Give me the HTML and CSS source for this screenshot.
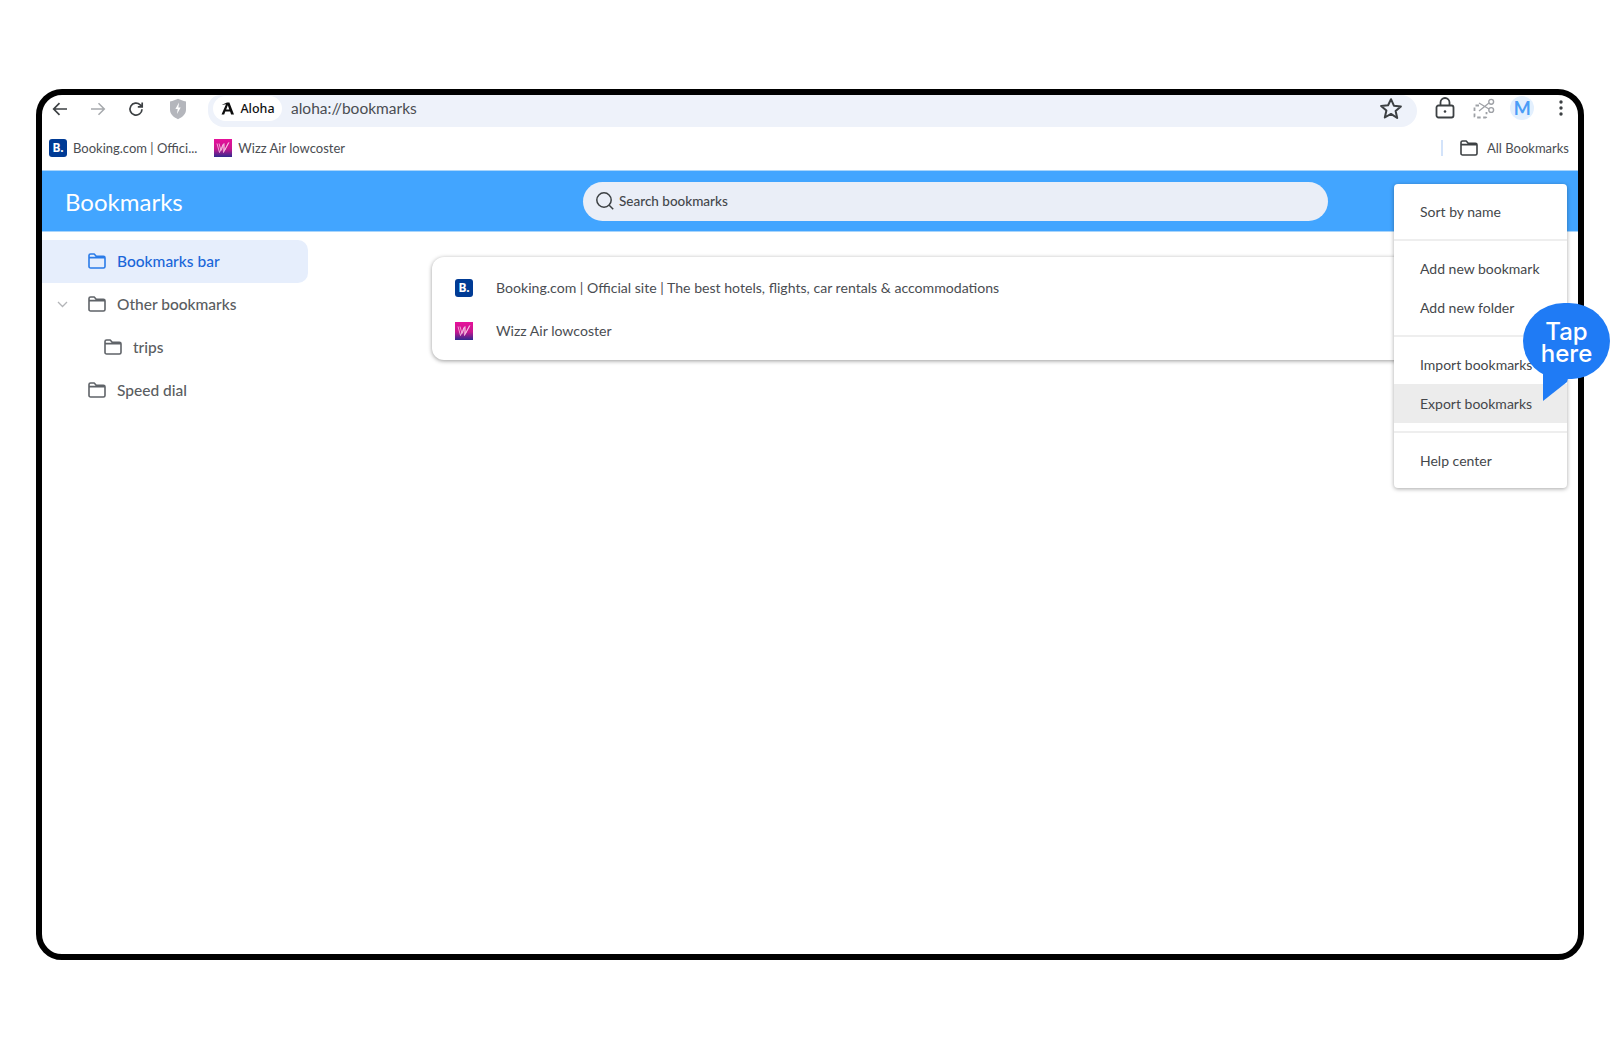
FILE: index.html
```html
<!DOCTYPE html>
<html lang="en">
<head>
<meta charset="utf-8">
<title>Bookmarks</title>
<link rel="stylesheet" href="styles.css">
</head>
<body>
<svg class="defs" width="0" height="0" aria-hidden="true">
  <defs>
    <symbol id="folder" viewBox="0 0 18 16"><path d="M1 4V2.600C1 1.700 1.700 1 2.600 1h3.600l2 2.200h7.200c.9 0 1.600.7 1.600 1.600v8.600c0 .9-.7 1.600-1.600 1.600H2.600c-.9 0-1.600-.7-1.600-1.600V4zM1 4.600h16" fill="none" stroke="currentColor" stroke-width="1.600" stroke-linejoin="round"/></symbol>
    <linearGradient id="wizz" x1="0" y1="0" x2="0" y2="1"><stop offset="0" stop-color="#e6119a"/><stop offset=".55" stop-color="#c8168f"/><stop offset="1" stop-color="#2f2a8f"/></linearGradient>
    <symbol id="wizzicon" viewBox="0 0 18 18"><rect width="18" height="18" fill="url(#wizz)"/><path d="M3 4.500l2.500 9 3.500-8 .5 8 5.500-10M5 4.500l2 7 3-7 .5 7 4-8" fill="none" stroke="#f7c7e6" stroke-width=".8"/></symbol>
  </defs>
</svg>
<div class="frame">
  <header class="toolbar">
    <div class="nav">
      <span class="tool"><svg width="18" height="18" viewBox="0 0 18 18"><path d="M16 9H3M8.500 3.200L2.700 9l5.800 5.800" fill="none" stroke="#3c4043" stroke-width="1.700"/></svg></span>
      <span class="tool"><svg width="18" height="18" viewBox="0 0 18 18"><path d="M2 9h13M9.500 3.200L15.300 9l-5.800 5.800" fill="none" stroke="#a6a9ad" stroke-width="1.500"/></svg></span>
      <span class="tool"><svg width="18" height="18" viewBox="0 0 18 18"><path d="M15 9.200a6 6 0 1 1-1.800-4.400L15 6.600M15.200 2.400v4.400h-4.400" fill="none" stroke="#3c4043" stroke-width="1.700"/></svg></span>
      <span class="tool shield"><svg width="18" height="22" viewBox="0 0 18 22"><path d="M1 3.400C4 3 6.600 2 9 .8c2.400 1.200 5 2.200 8 2.600v8.400c0 4.200-3.400 7.400-8 9.400-4.600-2-8-5.200-8-9.400z" fill="#b4b6bc"/><path d="M10 4.500L6.400 11h2.300L8 16l3.700-6.500H9.400z" fill="#fff"/></svg></span>
    </div>
    <div class="omnibox">
      <span class="pill">
        <svg width="15" height="13" viewBox="0 0 15 13"><path d="M7 .5h2.400L14 12.500h-2.900l-1-3H5.300l-1.100 3H1.500L6 2.300l-4.500.6zM6.200 7.400h3.100L7.800 3.300z" fill="#0c0c0c"/></svg>
        Aloha
      </span>
      <span class="url">aloha://bookmarks</span>
      <svg class="star" width="24" height="24" viewBox="0 0 24 24"><path d="M12 2.200l2.900 6.500 7 .7-5.300 4.700 1.600 6.900L12 16.900l-6.200 3.600 1.600-6.900-5.300-4.700 7-.7z" fill="none" stroke="#3c4043" stroke-width="2" stroke-linejoin="round"/></svg>
    </div>
    <div class="actions">
      <span class="action"><svg width="20" height="22" viewBox="0 0 20 22"><rect x="1.500" y="8.500" width="17" height="12" rx="2" fill="none" stroke="#3c4043" stroke-width="1.800"/><path d="M5.500 8.500V5.500a4.500 4.500 0 0 1 9 0v3" fill="none" stroke="#3c4043" stroke-width="1.800"/><circle cx="10" cy="14.500" r="1.300" fill="#3c4043"/></svg></span>
      <span class="action"><svg width="22" height="21" viewBox="0 0 22 21"><path d="M6 7.500H2.500a1 1 0 0 0-1 1v10a1 1 0 0 0 1 1h10a1 1 0 0 0 1-1V14" fill="none" stroke="#9ea1a6" stroke-width="1.800" stroke-dasharray="3.500 2.500"/><path d="M6 5l10 6M6 13l10-8" fill="none" stroke="#9ea1a6" stroke-width="1.300"/><circle cx="18.200" cy="3.800" r="2.400" fill="none" stroke="#9ea1a6" stroke-width="1.400"/><circle cx="18.200" cy="12" r="2.400" fill="none" stroke="#9ea1a6" stroke-width="1.400"/></svg></span>
      <span class="action"><span class="avatar">M</span></span>
      <span class="action"><svg width="4" height="16" viewBox="0 0 4 16"><circle cx="2" cy="2" r="1.700" fill="#3c4043"/><circle cx="2" cy="8" r="1.700" fill="#3c4043"/><circle cx="2" cy="14" r="1.700" fill="#3c4043"/></svg></span>
    </div>
  </header>

  <nav class="barks">
    <a class="bark first"><span class="fav-b small">B.</span>Booking.com | Offici...</a>
    <a class="bark"><svg class="fav" width="18" height="18"><use href="#wizzicon"/></svg>Wizz Air lowcoster</a>
    <span class="spacer"></span>
    <span class="divider"></span>
    <a class="bark all"><svg class="fold-dark" width="18" height="16"><use href="#folder"/></svg>All Bookmarks</a>
  </nav>

  <div class="pagehead">
    <h1>Bookmarks</h1>
    <div class="search">
      <svg width="20" height="20" viewBox="0 0 20 20"><circle cx="9" cy="9" r="7.200" fill="none" stroke="#3c4043" stroke-width="1.500"/><path d="M14.200 14.200l4 4" stroke="#3c4043" stroke-width="1.500"/></svg>
      <span>Search bookmarks</span>
    </div>
  </div>

  <main class="main">
    <aside class="tree">
      <div class="node selected"><svg width="18" height="16"><use href="#folder"/></svg>Bookmarks bar</div>
      <div class="node">
        <svg class="chev" width="11" height="7" viewBox="0 0 11 7"><path d="M1 1l4.500 4.500L10 1" fill="none" stroke="#b3b5b8" stroke-width="1.300"/></svg>
        <svg width="18" height="16"><use href="#folder"/></svg>Other bookmarks
      </div>
      <div class="node child"><svg width="18" height="16"><use href="#folder"/></svg>trips</div>
      <div class="node"><svg width="18" height="16"><use href="#folder"/></svg>Speed dial</div>
    </aside>
    <section class="content">
      <div class="card">
        <div class="row"><span class="fav-b">B.</span>Booking.com | Official site | The best hotels, flights, car rentals &amp; accommodations</div>
        <div class="row"><svg class="fav" width="18" height="18"><use href="#wizzicon"/></svg>Wizz Air lowcoster</div>
      </div>
    </section>
  </main>

  <div class="menu">
    <div class="item">Sort by name</div>
    <hr>
    <div class="item">Add new bookmark</div>
    <div class="item">Add new folder</div>
    <hr>
    <div class="item">Import bookmarks</div>
    <div class="item active">Export bookmarks</div>
    <hr>
    <div class="item">Help center</div>
  </div>

  <div class="bubble">
    <svg class="tail" width="30" height="40" viewBox="0 0 30 40"><path d="M0 0h30l-6 21L0 40z" fill="#1f7bf5"/></svg>
    <span>Tap<br>here</span>
  </div>
</div>
</body>
</html>
```

FILE: styles.css
```css
* { box-sizing: border-box; }
html, body { margin: 0; padding: 0; background: #fff; }
body { font-family: "Lato", "Noto Sans", sans-serif; color: #3c4043; }
.defs { position: absolute; }

.frame {
  position: relative;
  width: 1548px;
  height: 871px;
  margin: 89px 0 0 36px;
  border: 6px solid #000;
  border-radius: 26px;
  display: flex;
  flex-direction: column;
}

/* toolbar */
.toolbar { height: 32px; display: flex; align-items: center; }
.nav { display: flex; flex: none; width: 167px; margin: -5px 0 0 -1px; }
.tool { width: 38px; height: 24px; display: flex; align-items: center; justify-content: center; }
.tool.shield { margin-left: 4px; }
.omnibox {
  flex: none;
  width: 1209px;
  height: 32px;
  background: #eef2fa;
  border-radius: 14px 18px 18px 18px;
  display: flex;
  align-items: center;
  padding: 0 14px 0 5px;
}
.pill {
  height: 25px;
  width: 69px;
  margin-top: -6px;
  border-radius: 13px;
  background: #fff;
  display: flex;
  align-items: center;
  justify-content: center;
  gap: 5px;
  font-family: "Noto Sans", sans-serif;
  font-size: 12.500px;
  font-weight: 500;
  color: #111;
}
.url { margin-left: 9px; font-size: 15.500px; color: #4a4d52; margin-top: -6px; flex: 1; }
.star { margin-top: -4px; }
.actions { display: flex; align-items: center; margin-left: 9px; margin-top: -6px; }
.action { width: 38.500px; height: 24px; display: flex; align-items: center; justify-content: center; }
.avatar {
  width: 24px; height: 24px; border-radius: 50%;
  background: #e3f0fe; color: #4a9cf7;
  font-size: 18px; font-weight: 700;
  display: flex; align-items: center; justify-content: center;
}

/* bookmarks bar */
.barks { height: 44px; padding-bottom: 2px; display: flex; align-items: center; font-size: 13px; color: #4a4d52; border-bottom: 1px solid #a9d5fb; }
.bark { display: flex; align-items: center; gap: 6px; margin-right: 17px; white-space: nowrap; }
.bark.first { margin-left: 7px; }
.spacer { flex: 1; }
.divider { width: 2px; height: 16px; background: #d3e3fa; margin-right: 17px; }
.bark.all { gap: 9px; margin-right: 9px; }
.fold-dark { color: #3c4043; }
.fav { flex: none; display: block; }
.fav-b {
  width: 18px; height: 18px; flex: none;
  border-radius: 3px;
  background: #003b95; color: #fff;
  font-family: "Noto Sans", sans-serif;
  font-size: 12px; font-weight: 700; line-height: 18px;
  text-align: center;
}

/* page header */
.pagehead { height: 61px; background: #42a5ff; position: relative; display: flex; align-items: center; border-bottom: 1px solid #a9d5fb; }
.pagehead h1 { margin: 1px 0 0 23px; width: 518px; font-size: 24px; font-weight: 400; color: #fff; }
.search {
  width: 745px; height: 39px;
  border-radius: 20px;
  background: #eaeef7;
  display: flex; align-items: center; gap: 4px;
  padding-left: 12px;
  font-size: 13.500px; font-weight: 500; color: #44474b;
}

/* main */
.main { flex: 1; display: flex; }
.tree { width: 266px; padding-top: 8px; flex: none; }
.node {
  position: relative;
  height: 43px;
  padding-bottom: 1px;
  display: flex; align-items: center; gap: 11px;
  padding-left: 46px;
  font-size: 15.500px; font-weight: 500; color: #5a5d61;
}
.node svg { color: #5f6368; }
.node.child { padding-left: 62px; }
.node.selected { background: #e6eefc; color: #1a66d9; border-radius: 0 10px 10px 0; }
.node.selected svg { color: #2a7be8; }
.chev { position: absolute; left: 15px; top: 18px; }

.content { flex: 1; padding: 25px 0 0 124px; }
.card {
  width: 1000px; height: 103px;
  background: #fff;
  border-radius: 12px;
  box-shadow: 0 1px 4px rgba(0,0,0,.4);
  padding-top: 9px;
}
.row { height: 43px; display: flex; align-items: center; gap: 23px; padding-left: 23px; font-size: 14.100px; color: #4a4d52; }

/* overlay menu */
.menu {
  position: absolute;
  left: 1352px; top: 89px;
  width: 173px; height: 304px;
  background: #fff;
  border-radius: 4px;
  box-shadow: 0 1px 4px rgba(0,0,0,.35);
  padding-top: 8px;
  font-size: 14px; color: #44474b;
}
.item { height: 39px; display: flex; align-items: center; padding-left: 26px; white-space: nowrap; overflow: hidden; }
.item.active { background: #ececec; }
.menu hr { border: 0; height: 2px; background: #eeeeee; margin: 8px 0; }

.bubble {
  position: absolute;
  left: 1481px; top: 208px;
  width: 87px; height: 76px;
  padding-top: 4px;
  border-radius: 43px 43px 40px 40px / 40px;
  background: #1f7bf5;
  color: #fff;
  font-family: "Inter", sans-serif;
  font-size: 24px; line-height: 22px; font-weight: 500;
  text-align: center;
  display: flex; align-items: center; justify-content: center;
}
.bubble span { position: relative; }
.tail { position: absolute; left: 20px; top: 58px; }
```
